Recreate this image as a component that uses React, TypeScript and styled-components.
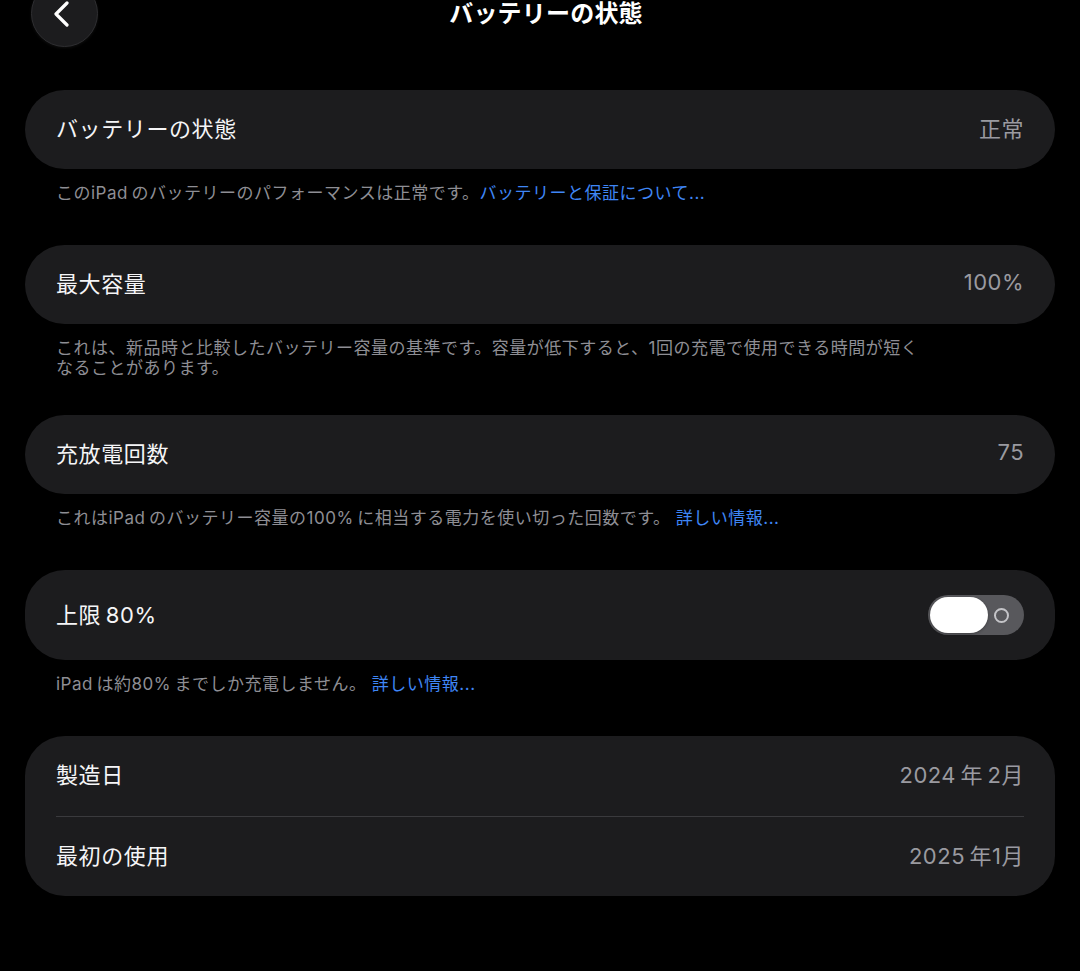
import React from "react";
import styled, { createGlobalStyle } from "styled-components";

const GlobalStyle = createGlobalStyle`
  html, body {
    margin: 0;
    padding: 0;
    background: #000;
  }
  body {
    font-family: "Inter", "Noto Sans CJK JP", "Noto Sans", sans-serif;
    color: #fff;
    -webkit-font-smoothing: antialiased;
  }
`;

const Page = styled.div`
  width: 1080px;
  height: 971px;
  box-sizing: border-box;
  padding: 0 25px;
  background: #000;
  overflow: hidden;
`;

const Header = styled.header`
  height: 27px;
  display: grid;
  grid-template-columns: 1fr auto 1fr;
  grid-template-rows: 27px;
  align-items: center;
  margin-bottom: 63px;
`;

const BackButton = styled.button`
  width: 67px;
  height: 67px;
  margin-left: 6px;
  border-radius: 50%;
  background: #1c1c1e;
  border: 1px solid #2e2e31;
  box-shadow: 0 1px 3px rgba(255, 255, 255, 0.06);
  display: flex;
  align-items: center;
  justify-content: center;
  padding: 0 5px 0 0;
  cursor: pointer;
  justify-self: start;
  align-self: center;
`;

const Title = styled.h1`
  margin: 0;
  padding-left: 12px;
  font-size: 24px;
  font-weight: 700;
  letter-spacing: 0.2px;
  line-height: 27px;
  color: #fff;
  white-space: nowrap;
`;

const Card = styled.section`
  background: #1c1c1e;
  border-radius: 40px;
  overflow: hidden;
`;

const Row = styled.div<{ $h?: number }>`
  height: ${(p) => p.$h ?? 79}px;
  display: flex;
  align-items: center;
  justify-content: space-between;
  padding: 0 31px 5px;
  box-sizing: border-box;
`;

const Separator = styled.div`
  height: 1px;
  margin: 0 31px;
  background: #3a3a3d;
`;

const Label = styled.span`
  font-size: 22px;
  letter-spacing: 0.6px;
  color: #f5f5f7;
`;

const Value = styled.span`
  font-size: 22px;
  letter-spacing: 0.5px;
  color: #9a9aa0;
`;

const Footer = styled.p`
  margin: 0;
  box-sizing: border-box;
  min-height: 76px;
  padding: 15px 31px 37px;
  font-size: 17px;
  line-height: 19.5px;
  letter-spacing: 0.5px;
  color: #8e8e94;
`;

const Link = styled.a`
  color: #3f86f5;
  text-decoration: none;
`;

const Toggle = styled.div`
  width: 96px;
  height: 40px;
  margin-top: 5px;
  border-radius: 20px;
  background: #58585c;
  box-sizing: border-box;
  padding: 2px;
  display: flex;
  align-items: center;
`;

const Knob = styled.div`
  width: 58px;
  height: 36px;
  border-radius: 18px;
  background: #fff;
  box-shadow: 0 1px 3px rgba(0, 0, 0, 0.3);
`;

const OffMark = styled.div`
  width: 11px;
  height: 11px;
  border-radius: 50%;
  border: 2px solid #c4c4c8;
  margin-left: 6px;
`;

export default function App() {
  return (
    <>
      <GlobalStyle />
      <Page>
        <Header>
          <BackButton aria-label="戻る">
            <svg width="16" height="26" viewBox="0 0 16 26" fill="none">
              <polyline
                points="13,2 2,13 13,24"
                stroke="#fff"
                strokeWidth="3.2"
                strokeLinecap="round"
                strokeLinejoin="round"
              />
            </svg>
          </BackButton>
          <Title>バッテリーの状態</Title>
          <div />
        </Header>

        <Card>
          <Row>
            <Label>バッテリーの状態</Label>
            <Value>正常</Value>
          </Row>
        </Card>
        <Footer>
          このiPad{"\u2009"}のバッテリーのパフォーマンスは正常です。
          <Link>バッテリーと保証について...</Link>
        </Footer>

        <Card>
          <Row>
            <Label>最大容量</Label>
            <Value>100%</Value>
          </Row>
        </Card>
        <Footer>
          これは、新品時と比較したバッテリー容量の基準です。容量が低下すると、1回の充電で使用できる時間が短く
          <br />
          なることがあります。
        </Footer>

        <Card>
          <Row>
            <Label>充放電回数</Label>
            <Value>75</Value>
          </Row>
        </Card>
        <Footer>
          これはiPad{"\u2009"}のバッテリー容量の100%{"\u2009"}に相当する電力を使い切った回数です。{" "}
          <Link>詳しい情報...</Link>
        </Footer>

        <Card>
          <Row $h={90}>
            <Label>上限{"\u2009"}80%</Label>
            <Toggle role="switch" aria-checked="false">
              <Knob />
              <OffMark />
            </Toggle>
          </Row>
        </Card>
        <Footer>
          iPad{"\u2009"}は約80%{"\u2009"}までしか充電しません。{" "}
          <Link>詳しい情報...</Link>
        </Footer>

        <Card>
          <Row $h={79.5}>
            <Label>製造日</Label>
            <Value>2024{"\u2009"}年{"\u2009"}2月</Value>
          </Row>
          <Separator />
          <Row $h={79.5}>
            <Label>最初の使用</Label>
            <Value>2025{"\u2009"}年1月</Value>
          </Row>
        </Card>
      </Page>
    </>
  );
}
